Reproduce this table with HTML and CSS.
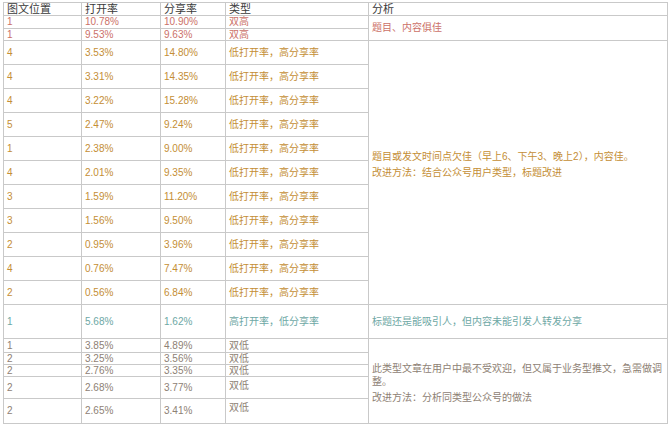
FILE: index.html
```html
<!DOCTYPE html>
<html lang="zh">
<head>
<meta charset="utf-8">
<link rel="stylesheet" href="styles.css">
</head>
<body>
<div class="sheet">
  <div class="c hd">图文位置</div><div class="c hd">打开率</div><div class="c hd">分享率</div><div class="c hd">类型</div><div class="c hd">分析</div>

  <div class="c red">1</div><div class="c red">10.78%</div><div class="c red">10.90%</div><div class="c red">双高</div><div class="c red an span2">题目、内容俱佳</div>
  <div class="c red">1</div><div class="c red">9.53%</div><div class="c red">9.63%</div><div class="c red">双高</div>

  <div class="c org">4</div><div class="c org">3.53%</div><div class="c org">14.80%</div><div class="c org">低打开率，高分享率</div>
  <div class="c org an span11"><div class="block-org"><div>题目或发文时间点欠佳（早上6、下午3、晚上2），内容佳。</div><div>改进方法：结合公众号用户类型，标题改进</div></div></div>
  <div class="c org">4</div><div class="c org">3.31%</div><div class="c org">14.35%</div><div class="c org">低打开率，高分享率</div>
  <div class="c org">4</div><div class="c org">3.22%</div><div class="c org">15.28%</div><div class="c org">低打开率，高分享率</div>
  <div class="c org">5</div><div class="c org">2.47%</div><div class="c org">9.24%</div><div class="c org">低打开率，高分享率</div>
  <div class="c org">1</div><div class="c org">2.38%</div><div class="c org">9.00%</div><div class="c org">低打开率，高分享率</div>
  <div class="c org">4</div><div class="c org">2.01%</div><div class="c org">9.35%</div><div class="c org">低打开率，高分享率</div>
  <div class="c org">3</div><div class="c org">1.59%</div><div class="c org">11.20%</div><div class="c org">低打开率，高分享率</div>
  <div class="c org">3</div><div class="c org">1.56%</div><div class="c org">9.50%</div><div class="c org">低打开率，高分享率</div>
  <div class="c org">2</div><div class="c org">0.95%</div><div class="c org">3.96%</div><div class="c org">低打开率，高分享率</div>
  <div class="c org">4</div><div class="c org">0.76%</div><div class="c org">7.47%</div><div class="c org">低打开率，高分享率</div>
  <div class="c org">2</div><div class="c org">0.56%</div><div class="c org">6.84%</div><div class="c org">低打开率，高分享率</div>

  <div class="c teal">1</div><div class="c teal">5.68%</div><div class="c teal">1.62%</div><div class="c teal">高打开率，低分享率</div><div class="c teal an">标题还是能吸引人，但内容未能引发人转发分享</div>

  <div class="c gray">1</div><div class="c gray">3.85%</div><div class="c gray">4.89%</div><div class="c gray">双低</div>
  <div class="c gray an span5"><div class="block-gray"><div class="wrap">此类型文章在用户中最不受欢迎，但又属于业务型推文，急需做调整。</div><div class="p2">改进方法：分析同类型公众号的做法</div></div></div>
  <div class="c gray">2</div><div class="c gray">3.25%</div><div class="c gray">3.56%</div><div class="c gray">双低</div>
  <div class="c gray">2</div><div class="c gray">2.76%</div><div class="c gray">3.35%</div><div class="c gray">双低</div>
  <div class="c gray">2</div><div class="c gray">2.68%</div><div class="c gray">3.77%</div><div class="c gray top">双低</div>
  <div class="c gray">2</div><div class="c gray">2.65%</div><div class="c gray">3.41%</div><div class="c gray top">双低</div>
</div>
</body>
</html>
```
FILE: styles.css
```css
html, body {
  margin: 0;
  padding: 0;
  background: #ffffff;
}
body {
  font-family: "Liberation Sans", "Noto Sans CJK SC", sans-serif;
  font-size: 10px;
}
.sheet {
  margin: 2px 0 0 3px;
  width: 665px;
  display: grid;
  grid-template-columns: 77px 78px 64px 142px 298px;
  grid-template-rows: 12px 12px 11px repeat(11, 23px) 33px 13px 11px 11px 21px 24px;
  gap: 1px;
  padding: 1px;
  box-sizing: border-box;
  background: #c9c9c9;
}
.c {
  background: #ffffff;
  padding: 0 3px;
  display: flex;
  align-items: center;
  white-space: nowrap;
  overflow: hidden;
  line-height: 12px;
}
.hd {
  color: #3a3a3a;
  font-size: 11px;
  line-height: 12px;
}
.red { color: #cc7168; }
.org { color: #c48e35; }
.teal { color: #6ea8a5; }
.gray { color: #8e8174; }
.an { white-space: normal; }
.span2 { grid-row: span 2; }
.span11 { grid-row: span 11; }
.span5 { grid-row: span 5; }
.top { align-items: flex-start; padding-top: 3px; }
.block-org {
  line-height: 16.5px;
  padding-bottom: 15px;
}
.block-gray {
  line-height: 13px;
  padding-top: 3px;
}
.block-gray .p2 { margin-top: 3px; }
```
